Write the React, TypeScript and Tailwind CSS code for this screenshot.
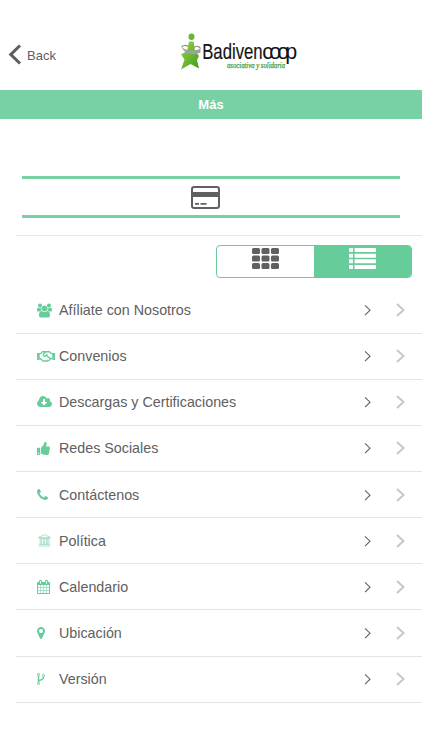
import type { ReactNode } from "react";
import { FaRegHandshake, FaThumbsUp } from "react-icons/fa";

type MenuItem = {
  label: string;
  icon: ReactNode;
};

type GlyphProps = {
  className: string;
  viewBox: string;
  d: string;
};

const Glyph = ({ className, viewBox, d }: GlyphProps) => (
  <svg className={className} viewBox={viewBox} fill="currentColor" aria-hidden="true">
    <path d={d} />
  </svg>
);

const items: MenuItem[] = [
  {
    label: "Afíliate con Nosotros",
    icon: (
      <Glyph
        className="h-[15px] w-[15px]"
        viewBox="-64 0 1920 1792"
        d="M529 896q-162 5-265 128h-134q-82 0-138-40.5t-56-118.5q0-353 124-353 6 0 43.5 21t97.5 42.5 119 21.5q67 0 133-23-5 37-5 66 0 139 81 256zm1071 637q0 120-73 189.5t-194 69.5h-874q-121 0-194-69.5t-73-189.5q0-53 3.5-103.5t14-109 26.5-108.5 43-97.5 62-81 85.5-53.5 111.5-20q10 0 43 21.5t73 48 107 48 135 21.5 135-21.5 107-48 73-48 43-21.5q61 0 111.5 20t85.5 53.5 62 81 43 97.5 26.5 108.5 14 109 3.5 103.5zm-1024-1277q0 106-75 181t-181 75-181-75-75-181 75-181 181-75 181 75 75 181zm704 384q0 159-112.5 271.5t-271.5 112.5-271.5-112.5-112.5-271.5 112.5-271.5 271.5-112.5 271.5 112.5 112.5 271.5zm576 225q0 78-56 118.5t-138 40.5h-134q-103-123-265-128 81-117 81-256 0-29-5-66 66 23 133 23 59 0 119-21.5t97.5-42.5 43.5-21q124 0 124 353zm-128-609q0 106-75 181t-181 75-181-75-75-181 75-181 181-75 181 75 75 181z"
      />
    ),
  },
  { label: "Convenios", icon: <FaRegHandshake className="h-[15px] w-[18px]" /> },
  {
    label: "Descargas y Certificaciones",
    icon: (
      <Glyph
        className="h-[14px] w-[15px]"
        viewBox="-64 0 1920 1792"
        d="M1216 928q0-14-9-23t-23-9h-224v-352q0-13-9.5-22.5t-22.5-9.5h-192q-13 0-22.5 9.5t-9.5 22.5v352h-224q-13 0-22.5 9.5t-9.5 22.5q0 14 9 23l352 352q9 9 23 9t23-9l351-351q10-12 10-24zm640 224q0 159-112.5 271.5t-271.5 112.5h-1088q-185 0-316.5-131.5t-131.5-316.5q0-130 70-240t188-165q-2-30-2-43 0-212 150-362t362-150q156 0 285.5 87t188.5 231q71-62 166-62 106 0 181 75t75 181q0 76-41 138 130 31 213.5 135.5t83.5 238.5z"
      />
    ),
  },
  { label: "Redes Sociales", icon: <FaThumbsUp className="h-[13px] w-[13px]" /> },
  {
    label: "Contáctenos",
    icon: (
      <Glyph
        className="h-[11px] w-[11px]"
        viewBox="192 128 1408 1408"
        d="M1600 1240q0 27-10 70.5t-21 68.5q-21 50-122 106-94 51-186 51-27 0-53-3.5t-57.5-12.5-47-14.5-55.5-20.5-49-18q-98-35-175-83-127-79-264-216t-216-264q-48-77-83-175-3-9-18-49t-20.5-55.5-14.5-47-12.5-57.5-3.5-53q0-92 51-186 56-101 106-122 25-11 68.5-21t70.5-10q14 0 21 3 18 6 53 76 11 19 30 54t35 63.5 31 53.5q3 4 17.5 25t21.5 35.5 7 28.5q0 20-28.5 50t-62 55-62 53-28.5 46q0 9 5 22.5t8.5 20.5 14 24 11.5 19q76 137 174 235t235 174q2 1 19 11.5t24 14 20.5 8.5 22.5 5q18 0 46-28.5t53-62 55-62 50-28.5q14 0 28.5 7t35.5 21.5 25 17.5q25 15 53.5 31t63.5 35 54 30q70 35 76 53 3 7 3 21z"
      />
    ),
  },
  {
    label: "Política",
    icon: (
      <svg
        className="ml-px h-[13px] w-[13px] opacity-75"
        viewBox="0 0 13 13"
        fill="none"
        stroke="currentColor"
        strokeWidth="0.7"
        aria-hidden="true"
      >
        <path d="M6.5 0.6 12.4 3.4H0.6ZM1.2 4.5h10.6M1.2 10.4h10.6M0.4 12h12.2" />
        <path d="M2.2 4.5v5.9M3.5 4.5v5.9M5.4 4.5v5.9M6.7 4.5v5.9M8.4 4.5v5.9M9.7 4.5v5.9M11 4.5v5.9" />
      </svg>
    ),
  },
  {
    label: "Calendario",
    icon: (
      <Glyph
        className="h-[14px] w-[13px]"
        viewBox="64 0 1664 1792"
        d="M192 1664h288v-288h-288v288zm352 0h320v-288h-320v288zm-352-352h288v-320h-288v320zm352 0h320v-320h-320v320zm-352-384h288v-288h-288v288zm736 736h320v-288h-320v288zm-384-736h320v-288h-320v288zm768 736h288v-288h-288v288zm-384-352h320v-320h-320v320zm-352-864v-288q0-13-9.5-22.5t-22.5-9.5h-64q-13 0-22.5 9.5t-9.5 22.5v288q0 13 9.5 22.5t22.5 9.5h64q13 0 22.5-9.5t9.5-22.5zm736 864h288v-320h-288v320zm-384-384h320v-288h-320v288zm384 0h288v-288h-288v288zm32-480v-288q0-13-9.5-22.5t-22.5-9.5h-64q-13 0-22.5 9.5t-9.5 22.5v288q0 13 9.5 22.5t22.5 9.5h64q13 0 22.5-9.5t9.5-22.5zm384-64v1280q0 52-38 90t-90 38h-1408q-52 0-90-38t-38-90v-1280q0-52 38-90t90-38h128v-96q0-66 47-113t113-47h64q66 0 113 47t47 113v96h384v-96q0-66 47-113t113-47h64q66 0 113 47t47 113v96h128q52 0 90 38t38 90z"
      />
    ),
  },
  {
    label: "Ubicación",
    icon: (
      <Glyph
        className="h-3 w-2"
        viewBox="384 128 1024 1536"
        d="M1152 640q0-106-75-181t-181-75-181 75-75 181 75 181 181 75 181-75 75-181zm256 0q0 109-33 179l-364 774q-16 33-47.5 52t-67.5 19-67.5-19-46.5-52l-365-774q-33-70-33-179 0-212 150-362t362-150 362 150 150 362z"
      />
    ),
  },
  {
    label: "Versión",
    icon: (
      <Glyph
        className="h-[12px] w-2"
        viewBox="384 128 1024 1536"
        d="M672 1472q0-40-28-68t-68-28-68 28-28 68 28 68 68 28 68-28 28-68zm0-1152q0-40-28-68t-68-28-68 28-28 68 28 68 68 28 68-28 28-68zm640 128q0-40-28-68t-68-28-68 28-28 68 28 68 68 28 68-28 28-68zm96 0q0 52-26 96.5t-70 69.5q-2 287-226 414-67 38-203 81-128 40-169.5 71t-41.5 100v26q44 25 70 69.5t26 96.5q0 80-56 136t-136 56-136-56-56-136q0-52 26-96.5t70-69.5v-820q-44-25-70-69.5t-26-96.5q0-80 56-136t136-56 136 56 56 136q0 52-26 96.5t-70 69.5v497q54-26 154-57 55-17 87.5-29.5t70.5-31 59-39.5 40.5-51 28-69.5 8.5-91.5q-44-25-70-69.5t-26-96.5q0-80 56-136t136-56 136 56 56 136z"
      />
    ),
  },
];

const Logo = () => (
  <svg className="h-10 w-[120px] overflow-visible" viewBox="0 0 120 40" role="img" aria-label="Badivencoop">
    <defs>
      <linearGradient id="body" x1="0" y1="0" x2="1" y2="1">
        <stop offset="0" stopColor="#9bd648" />
        <stop offset="1" stopColor="#3f9a1c" />
      </linearGradient>
    </defs>
    <ellipse cx="12.5" cy="4.8" rx="3" ry="3.3" fill="#62b82e" />
    <path d="M10 9.500H14.500L16 19 20 24 18 28 20 36.500 11.500 32 2 37.500 5.500 27.500 2 22.500 8 19Z" fill="url(#body)" />
    <path d="M2.500 14.500C5.500 19 15 20 21.500 16.500V20.500C15 24 5 22.500 2.500 14.500Z" fill="#9fa19e" />
    <path d="M2.500 14.800C5 13 7.500 13 9 14.500M15 15.500C17.500 13.500 20 14 21.500 16.500" fill="none" stroke="#8d908b" strokeWidth="1.200" />
    <text
      x="23.2"
      y="27"
      className="font-['Liberation_Sans',sans-serif] text-[21.5px]"
      fill="#161616"
      stroke="#161616"
      strokeWidth="0.2"
      textLength="60.5"
      lengthAdjust="spacingAndGlyphs"
    >
      Badiven
    </text>
    {/* the last four letters interlock */}
    <text
      x="83.3"
      y="27"
      className="font-['Liberation_Sans',sans-serif] text-[21.5px]"
      fill="#161616"
      letterSpacing="-3.9"
    >
      coop
    </text>
    <text
      x="48"
      y="35.8"
      className="font-['Liberation_Serif',serif] text-[8.5px] italic"
      fill="#3f9a3a"
      stroke="#3f9a3a"
      strokeWidth="0.25"
      textLength="58"
      lengthAdjust="spacingAndGlyphs"
    >
      asociativa y solidaria
    </text>
  </svg>
);

const Row = ({ label, icon }: MenuItem) => (
  <li className="flex h-[46.125px] items-center border-b border-[#e4e4e4] pl-[21px]">
    <span className="flex w-[22px] shrink-0 items-center text-[#66cc99]">{icon}</span>
    <span className="grow pt-[1.5px] text-[14.3px] text-[#606060]">{label}</span>
    <svg className="mr-[23px] h-3 w-[9px]" viewBox="0 0 9 12" fill="none" stroke="#606060" strokeWidth="1.1">
      <path d="M2 1.300 7 6.200 2 11.100" />
    </svg>
    <svg className="mr-[15px] h-4 w-[12px]" viewBox="0 0 12 16" fill="none" stroke="#c7c7cc" strokeWidth="2">
      <path d="M2 2 8.500 8 2 14" />
    </svg>
  </li>
);

const App = () => {
  return (
    <div className="flex min-h-screen w-full flex-col bg-white font-['Liberation_Sans',Arial,sans-serif]">
      <header className="grid h-[90px] grid-cols-[179px_1fr] pt-8">
        <button className="flex h-[46px] items-center pl-2 text-[13px] text-[#606060]">
          <svg className="mr-[5px] h-[22px] w-[14px]" viewBox="0 0 14 22" fill="none" stroke="#5e5e5e" strokeWidth="3.1">
            <path d="M12 1.500 2.800 10.500 12 19.500" />
          </svg>
          <span className="pt-0.5">Back</span>
        </button>
        <Logo />
      </header>
      <h1 className="flex h-[29px] items-center justify-center bg-[#77d1a5] text-[13px] font-bold text-white">
        Más
      </h1>

      <main className="flex flex-col pt-[57px]">
        <button className="mr-[22px] ml-[22px] flex h-[42px] items-center justify-center border-y-3 border-[#77d1a5] pr-3">
          <svg className="h-[23px] w-[29px]" viewBox="0 0 29 23" aria-label="Tarjeta">
            <rect x="1" y="1" width="27" height="21" rx="2.2" fill="none" stroke="#606060" strokeWidth="2" />
            <path d="M1 6h27v5H1zM4 17h4v1.800H4zM9.500 17h6v1.800h-6z" fill="#606060" />
          </svg>
        </button>
        <div className="mt-[17px] ml-4 flex h-[52.5px] justify-end border-t border-[#e8e8e8] pt-[9px] pr-[10px]">
          <div className="flex h-[33px] w-[196px] overflow-hidden rounded border border-[#66cc99]">
            <button className="flex w-1/2 justify-center pt-0.5">
              <svg className="h-[22px] w-[27px]" viewBox="0 0 27 22" fill="#606060" aria-label="Cuadrícula">
                {[0, 7.5, 15].map((y) =>
                  [0, 9.5, 19].map((x) => <rect key={`${x}-${y}`} x={x} y={y} width="8" height="6" rx="1.5" />)
                )}
              </svg>
            </button>
            <button className="flex w-1/2 justify-center bg-[#66cc99] pt-0.5">
              <svg className="h-[22px] w-[27px]" viewBox="0 0 27 22" fill="#fff" aria-label="Lista">
                {[0, 5.7, 11.3, 17].map((y) => (
                  <g key={y}>
                    <rect x="0" y={y} width="4" height="4" rx="0.4" />
                    <rect x="5.500" y={y} width="21.500" height="4" rx="0.4" />
                  </g>
                ))}
              </svg>
            </button>
          </div>
        </div>
        <ul className="ml-4">
          {items.map((item) => (
            <Row key={item.label} label={item.label} icon={item.icon} />
          ))}
        </ul>
      </main>
    </div>
  );
};

export default App;
